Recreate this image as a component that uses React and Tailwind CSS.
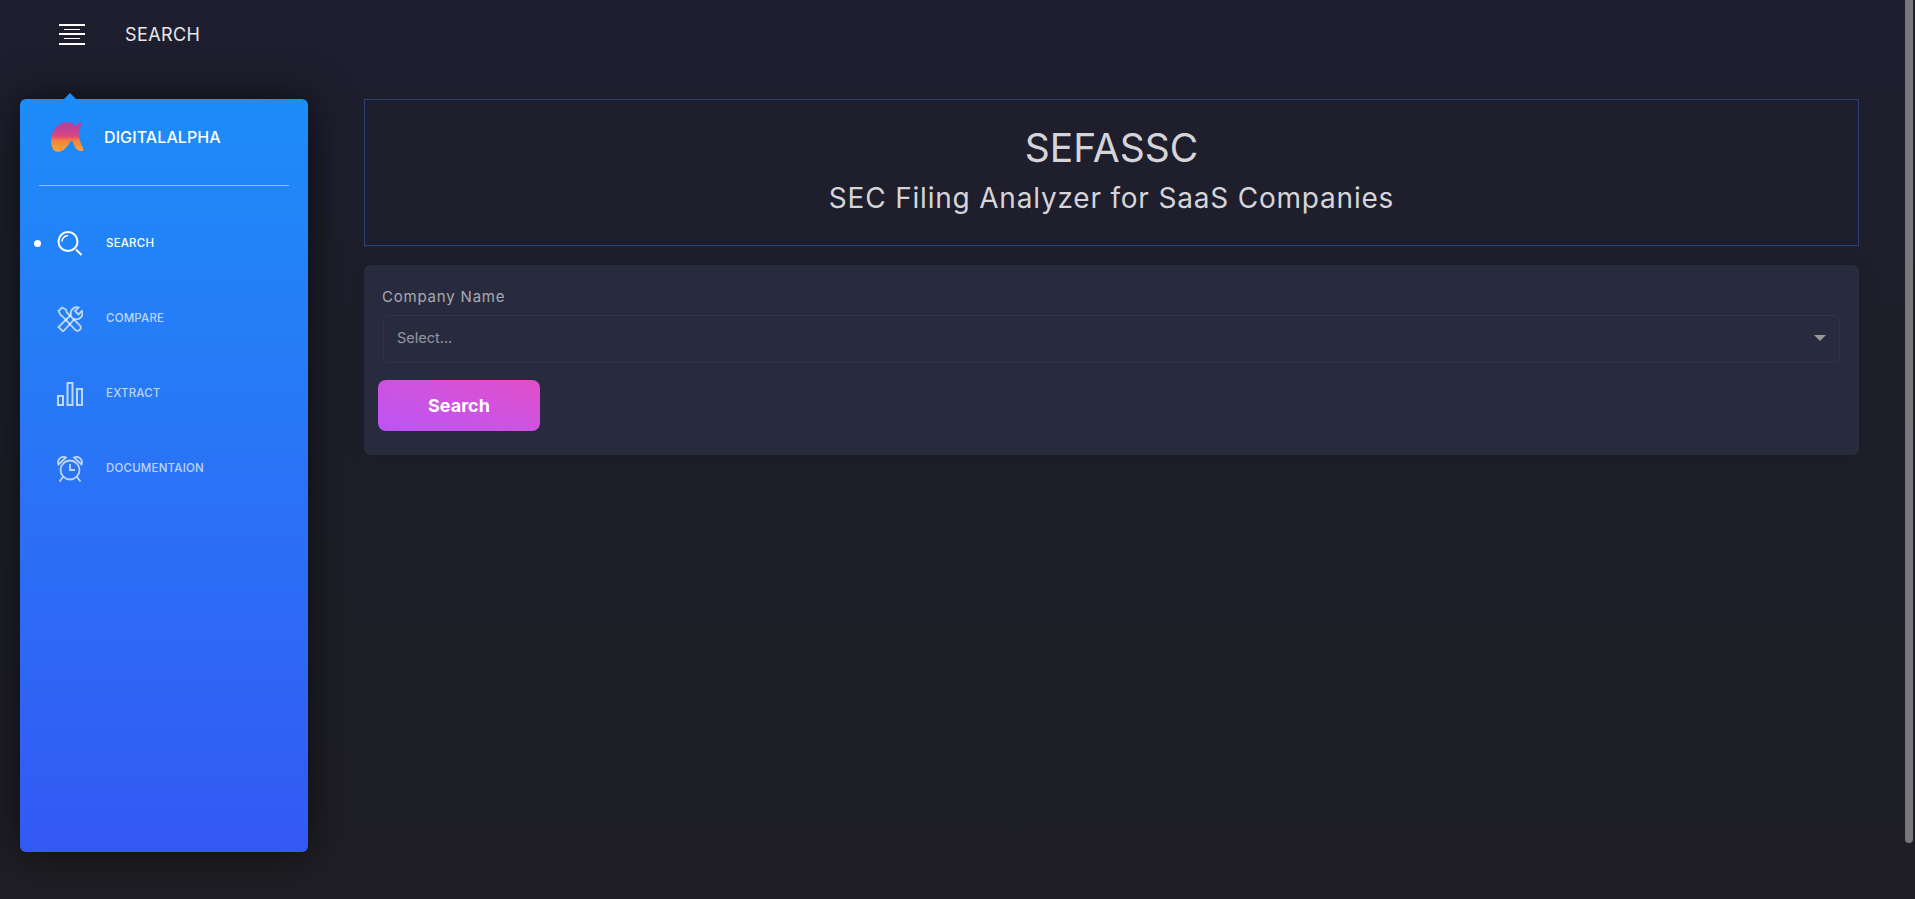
const font = "font-['Inter','Liberation_Sans',sans-serif]";

function SearchIcon() {
  return (
    <svg width="26" height="26" viewBox="0 0 26 26" fill="none" stroke="currentColor" strokeWidth="2">
      <circle cx="11" cy="10.5" r="9.5" />
      <path d="M5 10.5a6 6 0 0 1 6-6" strokeWidth="1.5" />
      <path d="M19 18.5l5.5 5.5" />
    </svg>
  );
}

function ToolsIcon() {
  return (
    <svg width="26" height="26" viewBox="0 0 26 26" fill="none" stroke="currentColor" strokeWidth="1.8">
      <path d="M1.5 5L5 1.5l4 2 .8 3L23 19.5a3.2 3.2 0 0 1-4.5 4.5L5.5 10.5 3.5 9z" />
      <path d="M25 5l-3.5 3.5-3.5-3.5L21.5 1.500a6 6 0 0 0-7.500 7.500L1.500 21 6 25.500 17.500 13a6 6 0 0 0 7.500-8z" />
    </svg>
  );
}

function BarsIcon() {
  return (
    <svg width="26" height="26" viewBox="0 0 26 26" fill="none" stroke="currentColor" strokeWidth="2">
      <rect x="1" y="15" width="5" height="9" />
      <rect x="10.500" y="2" width="5" height="22" />
      <rect x="20" y="8" width="5" height="16" />
    </svg>
  );
}

function ClockIcon() {
  return (
    <svg width="26" height="26" viewBox="0 0 26 26" fill="none" stroke="currentColor" strokeWidth="1.8">
      <circle cx="13" cy="14" r="9.500" />
      <path d="M13 8v6h5" />
      <path d="M1.500 8.500a5.500 5.500 0 0 1 7.500-7zM24.500 8.500a5.500 5.500 0 0 0-7.500-7z" />
      <path d="M6 21l-3.500 4.500M20 21l3.500 4.500" />
    </svg>
  );
}

function Logo() {
  return (
    <svg width="34" height="32" viewBox="0 0 34 32" className="-ml-[1px]">
      <defs>
        <linearGradient id="leaf" x1="0" y1="0" x2="0" y2="1">
          <stop offset="0" stopColor="#a9479f" />
          <stop offset="0.3" stopColor="#c8418f" />
          <stop offset="0.5" stopColor="#e24a78" />
          <stop offset="0.62" stopColor="#f0823a" />
          <stop offset="1" stopColor="#f8a63c" />
        </linearGradient>
      </defs>
      <path d="M1 20C1 10 8 1 17 1c4 0 7 1.500 8.500 4.500L29 1l2.500 1-3 10c0 6 3 11 5 16.500l-1 1.500c-4 .5-7-2-8.500-6l-2-5c-3 3-6 10-12 11.500C4 32 1 27 1 20z" fill="url(#leaf)" />
    </svg>
  );
}

const items = [
  { label: "SEARCH", icon: SearchIcon, active: true },
  { label: "COMPARE", icon: ToolsIcon },
  { label: "EXTRACT", icon: BarsIcon },
  { label: "DOCUMENTAION", icon: ClockIcon },
];

function Sidebar() {
  return (
    <aside className="relative ml-5 mt-[31px] h-[753px] w-[288px] shrink-0 rounded-md bg-linear-to-b from-[#1d8cf8] to-[#3358f4] shadow-[0_0_45px_rgba(0,0,0,0.6)]">
      <div className="absolute -top-[6px] left-[44px] h-0 w-0 border-x-[6px] border-b-[6px] border-x-transparent border-b-[#1d8cf8]" />
      <div className="mx-[19px] flex h-[87px] items-center gap-5 border-b border-white/50 pl-3 pb-[11px]">
        <Logo />
        <span className="text-[16px] font-medium tracking-[0.1px] text-white">DIGITALALPHA</span>
      </div>
      <nav className="mt-[20px] flex flex-col">
        {items.map(({ label, icon: Icon, active }) => (
          <div key={label} className={`relative flex h-[75px] items-center pl-[37px] ${active ? "text-white" : "text-white/70"}`}>
            {active && <span className="absolute left-[14px] h-[7px] w-[7px] rounded-full bg-white" />}
            <Icon />
            <span className="ml-[23px] text-[11.5px] font-medium tracking-[0.2px]">{label}</span>
          </div>
        ))}
      </nav>
    </aside>
  );
}

export default function App() {
  return (
    <div className={`relative h-[899px] overflow-hidden bg-linear-to-b from-[#1e1e2f] to-[#1e1e24] ${font}`}>
      <header className="flex h-[68px] items-center pl-[59px]">
        <div className="flex h-[21px] w-[26px] flex-col items-center justify-between">
          <span className="h-[2px] w-[26px] bg-white" />
          <span className="h-[1px] w-[16px] bg-white" />
          <span className="h-[2px] w-[26px] bg-white" />
          <span className="h-[1px] w-[16px] bg-white" />
          <span className="h-[2px] w-[26px] bg-white" />
        </div>
        <span className="ml-[40px] text-[18px] tracking-[0.4px] text-white/90">SEARCH</span>
      </header>
      <div className="flex">
        <Sidebar />
        <main className="ml-[56px] mt-[31px] w-[1495px]">
          <div className="flex h-[147px] flex-col items-center justify-center border border-[#2b4075] pb-[1px] text-[#d5d5d9]">
            <h1 className="text-[39px] leading-[48px]">SEFASSC</h1>
            <h2 className="mt-1 text-[28px] leading-[44px] tracking-[0.8px]">SEC Filing Analyzer for SaaS Companies</h2>
          </div>
          <div className="mt-[19px] h-[190px] rounded-md bg-[#282b3e] pl-[14px] pr-[19px] pt-[22px] shadow-[0_1px_20px_rgba(0,0,0,0.1)]">
            <label className="ml-[4px] block text-[15px] leading-[20px] tracking-[0.8px] text-white/60">Company Name</label>
            <div className="ml-[5px] mt-[8px] flex h-[48px] items-center justify-between rounded-md border border-[#2b3553] pb-[2px] pl-[13px] pr-[13px]">
              <span className="text-[14.5px] text-white/50">Select...</span>
              <span className="h-0 w-0 border-x-[6px] border-t-[6px] border-x-transparent border-t-[#999]" />
            </div>
            <button className="mt-[17px] h-[51px] w-[162px] rounded-lg bg-linear-to-tr from-[#ba54f5] to-[#e14eca] text-[18px] font-bold text-white">
              Search
            </button>
          </div>
        </main>
      </div>
      {/* fake scrollbar thumb */}
      <div className="absolute right-[2px] top-0 h-[843px] w-2 rounded-b-full bg-[#78787c]" />
    </div>
  );
}
